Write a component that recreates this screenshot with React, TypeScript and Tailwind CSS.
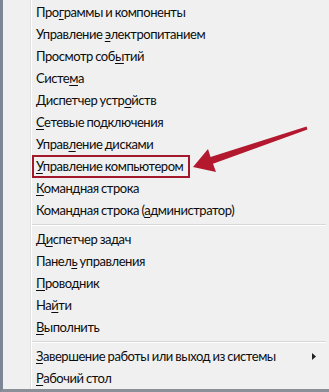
import React from 'react'

type Item = { pre: string; key: string; post: string; sub?: boolean } | 'sep'

const items: Item[] = [
  { pre: 'Про', key: 'г', post: 'раммы и компоненты' },
  { pre: 'Управление ', key: 'э', post: 'лектропитанием' },
  { pre: 'Просмотр соб', key: 'ы', post: 'тий' },
  { pre: 'Систе', key: 'м', post: 'а' },
  { pre: 'Диспетчер устр', key: 'о', post: 'йств' },
  { pre: '', key: 'С', post: 'етевые подключения' },
  { pre: 'Управ', key: 'л', post: 'ение дисками' },
  { pre: '', key: 'У', post: 'правление компьютером' },
  { pre: '', key: 'К', post: 'омандная строка' },
  { pre: 'Командная строка (', key: 'а', post: 'дминистратор)' },
  'sep',
  { pre: 'Д', key: 'и', post: 'спетчер задач' },
  { pre: 'Панел', key: 'ь', post: ' управления' },
  { pre: '', key: 'П', post: 'роводник' },
  { pre: 'На', key: 'й', post: 'ти' },
  { pre: '', key: 'В', post: 'ыполнить' },
  'sep',
  { pre: '', key: 'З', post: 'авершение работы или выход из системы', sub: true },
  { pre: '', key: 'Р', post: 'абочий стол' },
]

export default function App() {
  return (
    <div
      className="relative w-[329px] h-[392px] bg-[#f0f0f0] border-l-[3px] border-l-[#7d8694] border-b-[3px] border-b-[#8b9098] flex text-[13px] tracking-[-0.45px] [word-spacing:-0.5px] text-[#0d0d0d]"
      style={{ fontFamily: 'Lato, "Noto Sans", sans-serif' }}
    >
      {/* icon gutter */}
      <div className="w-[28px] shrink-0 border-r border-r-[#e0e0e0]" />
      <div className="w-px bg-white shrink-0" />

      <div className="flex-1 flex flex-col pt-px pr-[3px]">
        {items.map((it, i) =>
          it === 'sep' ? (
            <div key={i} className="h-[7px] flex flex-col justify-center">
              <div className="border-t border-t-[#d7d7d7] border-b border-b-white" />
            </div>
          ) : (
            <div key={i} className="h-[22px] flex items-center pl-[4px] leading-none whitespace-nowrap">
              <span>
                {it.pre}
                <span className="underline underline-offset-2">{it.key}</span>
                {it.post}
              </span>
              {it.sub && (
                <svg className="ml-auto mr-[10px]" width="4" height="7" viewBox="0 0 4 7">
                  <path d="M0 0 L4 3.5 L0 7 Z" fill="#222" />
                </svg>
              )}
            </div>
          )
        )}
      </div>

      {/* annotation: red box + arrow */}
      <div className="absolute left-[29px] top-[155px] w-[158px] h-[23px] border-2 border-[#a3192b]" />
      <svg className="absolute left-[-3px] top-0" width="329" height="392" viewBox="0 0 329 392">
        <polygon
          points="193,167 208,149 210.5,157 306.6,126.4 307.4,129.6 213,163.8 216,172"
          fill="#b3182e"
        />
      </svg>
    </div>
  )
}
